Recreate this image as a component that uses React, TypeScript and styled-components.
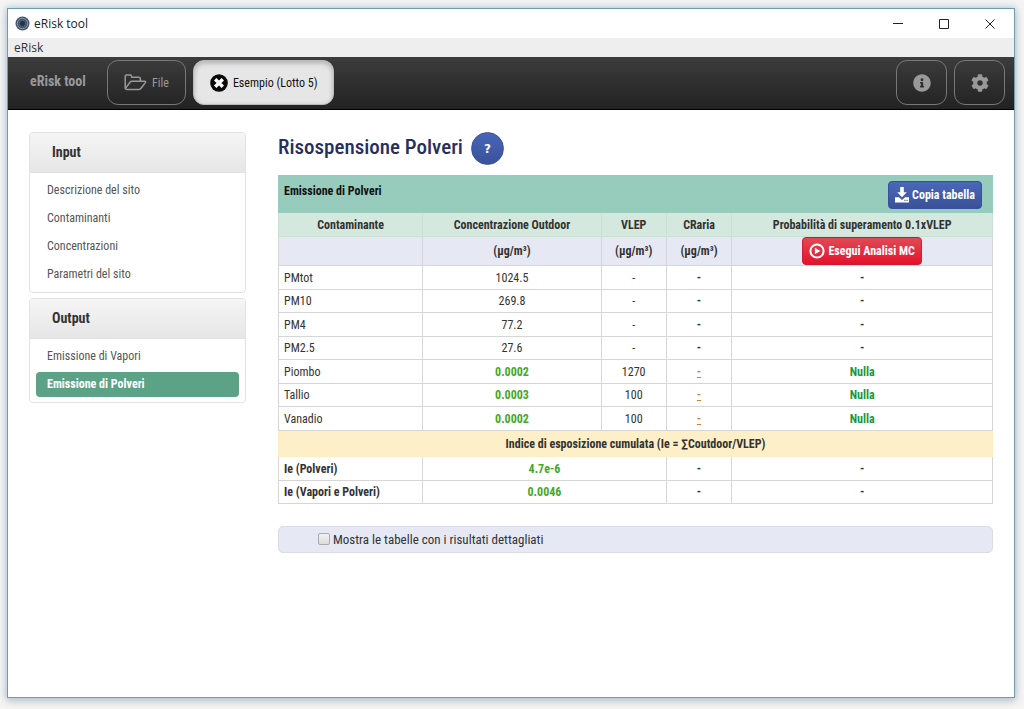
import React from "react";
import styled, { createGlobalStyle, css } from "styled-components";
import { FaInfoCircle, FaCog } from "react-icons/fa";

const GlobalStyle = createGlobalStyle`
  *, *::before, *::after { box-sizing: border-box; }
  body {
    margin: 0;
    background: #f6f5f4;
    font-family: "Roboto Condensed", "Liberation Sans Narrow", "Liberation Sans", sans-serif;
    font-size: 12px;
    line-height: 20px;
    color: #333;
  }
  button { font: inherit; cursor: pointer; }
`;

const Desktop = styled.div`
  display: flex;
  min-height: 100vh;
  padding: 8px 9px 11px 7px;
`;

const Window = styled.div`
  flex: 1;
  min-width: 0;
  display: flex;
  flex-direction: column;
  background: #fff;
  border: 1px solid #6f9bb5;
  box-shadow: 0 0 7px 1px rgba(120, 165, 200, 0.5), 0 4px 8px rgba(0, 0, 0, 0.12);
`;

const TitleBar = styled.header`
  display: flex;
  align-items: center;
  height: 29px;
  padding: 0 16px 0 7px;
  font-family: "Open Sans", sans-serif;
  font-size: 12px;
  color: #222;
`;

const WindowTitle = styled.span`
  flex: 1;
  margin-left: 4px;
`;

const WindowButtons = styled.div`
  display: flex;
  gap: 30px;
`;

const WindowButton = styled.button`
  display: flex;
  width: 16px;
  height: 16px;
  padding: 2px;
  border: 0;
  background: none;
`;

const MenuBar = styled.nav`
  height: 19px;
  padding: 0 6px;
  background: #eee;
  font-family: "Open Sans", sans-serif;
  font-size: 12px;
  line-height: 19px;
`;

const MenuLink = styled.a`
  color: #333;
  text-decoration: none;
`;

const Toolbar = styled.div`
  display: flex;
  align-items: flex-start;
  gap: 7px;
  height: 53px;
  padding: 3px 9px 0 22px;
  background: linear-gradient(#3c3c3c, #222);
  border-bottom: 1px solid #000;
`;

const Brand = styled.span`
  width: 70px;
  padding-top: 11px;
  font-size: 14px;
  font-weight: bold;
  color: #999;
  white-space: nowrap;
`;

const ToolButton = styled.button<{ $active?: boolean; $square?: boolean }>`
  display: flex;
  align-items: center;
  justify-content: center;
  gap: 5px;
  height: 45px;
  min-width: 51px;
  padding: ${(p) => (p.$square ? "0" : "0 16px")};
  border: 1px solid #777;
  border-radius: 11px;
  background: transparent;
  color: #999;
  white-space: nowrap;
  ${(p) =>
    p.$active &&
    css`
      border-color: #bbb;
      background: #e6e6e6;
      box-shadow: inset 0 2px 5px rgba(0, 0, 0, 0.25);
      color: #111;
    `}
`;

const Spacer = styled.div`
  flex: 1;
`;

const Content = styled.div`
  display: flex;
  align-items: flex-start;
  gap: 32px;
  padding: 22px 21px 22px;
`;

const Sidebar = styled.aside`
  display: flex;
  flex-direction: column;
  flex: 0 0 217px;
  gap: 5px;
`;

const Panel = styled.section`
  border: 1px solid #e2e2e2;
  border-radius: 4px;
  overflow: hidden;
`;

const PanelTitle = styled.h2`
  margin: 0;
  padding: 9px 22px 10px;
  background: linear-gradient(#f5f5f5, #e6e6e6);
  border-bottom: 1px solid #e2e2e2;
  font-size: 14px;
  font-weight: bold;
  line-height: 20px;
`;

const PanelList = styled.ul`
  display: flex;
  flex-direction: column;
  gap: 3px;
  margin: 0;
  padding: 5px 6px;
  list-style: none;
`;

const PanelLink = styled.a<{ $active?: boolean }>`
  display: block;
  padding: 0 11px;
  border-radius: 4px;
  line-height: 25px;
  text-decoration: none;
  color: ${(p) => (p.$active ? "#fff" : "#555")};
  background: ${(p) => (p.$active ? "#5ba286" : "transparent")};
  font-weight: ${(p) => (p.$active ? "bold" : "normal")};
`;

const Main = styled.main`
  flex: 1;
  min-width: 0;
`;

const Heading = styled.div`
  display: flex;
  align-items: center;
  gap: 8px;
  height: 33px;
  margin-bottom: 10px;
`;

const Title = styled.h1`
  margin: 0;
  padding-bottom: 4px;
  font-size: 21px;
  font-weight: 500;
  line-height: 28px;
  color: #27305c;
  white-space: nowrap;
`;

const HelpButton = styled.button`
  width: 33px;
  height: 33px;
  padding: 0;
  border: 1px solid #3a5294;
  border-radius: 50%;
  background: linear-gradient(#4766b8, #3a519b);
  color: #fff;
  && {
    font-family: "DejaVu Sans", sans-serif;
    font-size: 12px;
    font-weight: bold;
  }
`;

const ActionButton = styled.button<{ $danger?: boolean }>`
  display: inline-flex;
  align-items: center;
  justify-content: center;
  gap: 3px;
  height: 28px;
  padding: 0 6px;
  border: 1px solid ${(p) => (p.$danger ? "#d01c30" : "#36509a")};
  border-radius: 4px;
  background: ${(p) =>
    p.$danger ? "linear-gradient(#e04a55, #e5132c)" : "linear-gradient(#4a68b8, #3a5199)"};
  color: #fff;
  vertical-align: top;
  white-space: nowrap;
  && { font-weight: bold; }
`;

const Table = styled.table`
  width: 100%;
  border-collapse: collapse;
  table-layout: fixed;
`;

const Col = styled.col<{ $width?: string }>`
  width: ${(p) => p.$width ?? "auto"};
`;

const Cell = styled.td`
  padding: 0 5px;
  border: 1px solid #d6d6d6;
  text-align: center;
  white-space: nowrap;
`;

const HeadCell = styled(Cell).attrs({ as: "th" })`
  border-color: #cbe0d5;
  background: #d4e8de;
`;

const UnitCell = styled(Cell)`
  border-top-color: #e6e8f3;
  background: #e6e8f3;
  font-weight: bold;
`;

const NameCell = styled(Cell).attrs({ as: "th", scope: "row" })<{ $strong?: boolean }>`
  text-align: left;
  font-weight: ${(p) => (p.$strong ? "bold" : "normal")};
`;

const BannerCell = styled(HeadCell)`
  border-color: #97cbbb;
  background: #97cbbb;
  color: #111;
`;

const Banner = styled.div`
  display: flex;
  align-items: flex-start;
  justify-content: space-between;
  padding: 4px 5px 3px 0;
`;

const SumCell = styled(HeadCell)`
  border-color: #fdefc4;
  background: #fdf0c8;
`;

const Row = styled.tr<{ $height: number }>`
  height: ${(p) => p.$height}px;
`;

const Value = styled.span<{ $tone?: "green" | "risk" | "dark" }>`
  font-weight: ${(p) => (p.$tone ? "bold" : "normal")};
  color: ${(p) => (p.$tone === "green" ? "#43a82c" : p.$tone === "risk" ? "#16993f" : "inherit")};
`;

const DashLink = styled.a`
  color: #c98637;
  font-weight: bold;
  text-decoration: underline;
`;

const DetailBar = styled.div`
  display: flex;
  align-items: center;
  height: 27px;
  margin-top: 22px;
  padding-left: 39px;
  border: 1px solid #dadde8;
  border-radius: 5px;
  background: #e6e8f3;
`;

const DetailLabel = styled.label`
  display: flex;
  align-items: center;
  gap: 3px;
  font-size: 13px;
`;

const CheckBox = styled.input`
  appearance: none;
  width: 12px;
  height: 12px;
  margin: 0 0 2px;
  border: 1px solid #aaa;
  border-radius: 2px;
  background: linear-gradient(#f2f2f2, #dcdcdc);
  &:checked { background: #5ba286; }
`;

const AppIcon = () => (
  <svg width="15" height="15" viewBox="0 0 15 15" aria-hidden="true">
    <circle cx="7.5" cy="7.5" r="7" fill="#44566c" />
    <circle cx="7.5" cy="7.5" r="5.2" fill="none" stroke="#8b9aa9" strokeWidth="1" />
    <circle cx="7.5" cy="7.5" r="3" fill="#1f3550" stroke="#8294a6" strokeWidth="0.8" strokeDasharray="1 1" />
  </svg>
);

const FolderIcon = () => (
  <svg width="23" height="17" viewBox="0 0 23 17" fill="none" stroke="currentColor" strokeWidth="1.5" strokeLinejoin="round" aria-hidden="true">
    <path d="M1.2 14.2V2.4Q1.2 1 2.6 1H6.2Q7.6 1 7.6 2.4V3.2H14.8Q16.4 3.2 16.4 4.8V7" />
    <path d="M1.3 14.6L6 8.2Q6.8 7.2 8 7.2H20.6Q22.2 7.2 21.3 8.6L17.3 14Q16.3 15.4 15 15.4H2.6Q1.2 15.4 1.2 14" />
  </svg>
);

const CloseIcon = () => (
  <svg width="18" height="18" viewBox="0 0 18 18" aria-hidden="true">
    <circle cx="9" cy="9" r="8.8" fill="#0a0a0a" />
    <path d="M5.2 5.2L12.8 12.8M12.8 5.2L5.2 12.8" stroke="#fff" strokeWidth="3.4" />
  </svg>
);

const DownloadIcon = () => (
  <svg width="14" height="16" viewBox="0 0 14 16" fill="currentColor" aria-hidden="true">
    <path d="M5.2 0H8.8V5.2H11.8L7 10.2L2.2 5.2H5.2Z" />
    <path fillRule="evenodd" d="M0 10.2H4L7 13L10 10.2H14V15.4H0ZM9.4 12.8V14H10.5V12.8ZM11.6 12.8V14H12.7V12.8Z" />
  </svg>
);

const PlayIcon = () => (
  <svg width="16" height="16" viewBox="0 0 16 16" aria-hidden="true">
    <circle cx="8" cy="8" r="6.6" fill="none" stroke="currentColor" strokeWidth="2" />
    <path d="M5.9 4.7L11.4 8L5.9 11.3Z" fill="currentColor" />
  </svg>
);

const windowGlyphs: [string, string][] = [
  ["Riduci", "M1 5.5H11"],
  ["Ingrandisci", "M1.5 1.5H10.5V10.5H1.5Z"],
  ["Chiudi", "M1.5 1.5L10.5 10.5M10.5 1.5L1.5 10.5"],
];

const panels = [
  { title: "Input", items: ["Descrizione del sito", "Contaminanti", "Concentrazioni", "Parametri del sito"] },
  { title: "Output", items: ["Emissione di Vapori", "Emissione di Polveri"] },
];
const currentPage = "Emissione di Polveri";

const dusts = [
  ["PMtot", "1024.5"],
  ["PM10", "269.8"],
  ["PM4", "77.2"],
  ["PM2.5", "27.6"],
];
const metals = [
  ["Piombo", "0.0002", "1270"],
  ["Tallio", "0.0003", "100"],
  ["Vanadio", "0.0002", "100"],
];
const indices = [
  ["Ie (Polveri)", "4.7e-6"],
  ["Ie (Vapori e Polveri)", "0.0046"],
];

const rowHeight = (index: number) => (index % 2 ? 23 : 24);

export default function App() {
  return (
    <>
      <GlobalStyle />
      <Desktop>
        <Window>
          <TitleBar>
            <AppIcon />
            <WindowTitle>eRisk tool</WindowTitle>
            <WindowButtons>
              {windowGlyphs.map(([label, d]) => (
                <WindowButton key={label} type="button" aria-label={label}>
                  <svg width="12" height="12" viewBox="0 0 12 12" fill="none" stroke="#222">
                    <path d={d} />
                  </svg>
                </WindowButton>
              ))}
            </WindowButtons>
          </TitleBar>
          <MenuBar>
            <MenuLink href="#erisk">eRisk</MenuLink>
          </MenuBar>
          <Toolbar>
            <Brand>eRisk tool</Brand>
            <ToolButton type="button">
              <FolderIcon />
              File
            </ToolButton>
            <ToolButton type="button" $active>
              <CloseIcon />
              Esempio (Lotto 5)
            </ToolButton>
            <Spacer />
            <ToolButton type="button" aria-label="Informazioni" $square>
              <FaInfoCircle size={18} />
            </ToolButton>
            <ToolButton type="button" aria-label="Impostazioni" $square>
              <FaCog size={18} />
            </ToolButton>
          </Toolbar>
          <Content>
            <Sidebar>
              {panels.map((panel) => (
                <Panel key={panel.title}>
                  <PanelTitle>{panel.title}</PanelTitle>
                  <PanelList>
                    {panel.items.map((item) => (
                      <li key={item}>
                        <PanelLink href="#" $active={item === currentPage}>
                          {item}
                        </PanelLink>
                      </li>
                    ))}
                  </PanelList>
                </Panel>
              ))}
            </Sidebar>
            <Main>
              <Heading>
                <Title>Risospensione Polveri</Title>
                <HelpButton type="button" aria-label="Aiuto">?</HelpButton>
              </Heading>
              <Table>
                <colgroup>
                  <Col $width="20.2%" />
                  <Col $width="25%" />
                  <Col $width="9.1%" />
                  <Col $width="9.2%" />
                  <Col />
                </colgroup>
                <thead>
                  <Row $height={37}>
                    <BannerCell colSpan={5}>
                      <Banner>
                        <span>Emissione di Polveri</span>
                        <ActionButton type="button">
                          <DownloadIcon />
                          Copia tabella
                        </ActionButton>
                      </Banner>
                    </BannerCell>
                  </Row>
                  <Row $height={24}>
                    <HeadCell>Contaminante</HeadCell>
                    <HeadCell>Concentrazione Outdoor</HeadCell>
                    <HeadCell>VLEP</HeadCell>
                    <HeadCell>CRaria</HeadCell>
                    <HeadCell>Probabilità di superamento 0.1xVLEP</HeadCell>
                  </Row>
                </thead>
                <tbody>
                  <Row $height={29}>
                    <UnitCell />
                    <UnitCell>(µg/m³)</UnitCell>
                    <UnitCell>(µg/m³)</UnitCell>
                    <UnitCell>(µg/m³)</UnitCell>
                    <UnitCell>
                      <ActionButton type="button" $danger>
                        <PlayIcon />
                        Esegui Analisi MC
                      </ActionButton>
                    </UnitCell>
                  </Row>
                  {dusts.map(([name, outdoor], i) => (
                    <Row key={name} $height={rowHeight(i)}>
                      <NameCell>{name}</NameCell>
                      <Cell>{outdoor}</Cell>
                      <Cell>-</Cell>
                      <Cell><Value $tone="dark">-</Value></Cell>
                      <Cell><Value $tone="dark">-</Value></Cell>
                    </Row>
                  ))}
                  {metals.map(([name, outdoor, vlep], i) => (
                    <Row key={name} $height={rowHeight(i)}>
                      <NameCell>{name}</NameCell>
                      <Cell><Value $tone="green">{outdoor}</Value></Cell>
                      <Cell>{vlep}</Cell>
                      <Cell><DashLink href="#">-</DashLink></Cell>
                      <Cell><Value $tone="risk">Nulla</Value></Cell>
                    </Row>
                  ))}
                  <Row $height={26}>
                    <SumCell colSpan={5}>Indice di esposizione cumulata (Ie = ∑Coutdoor/VLEP)</SumCell>
                  </Row>
                  {indices.map(([name, value], i) => (
                    <Row key={name} $height={rowHeight(i)}>
                      <NameCell $strong>{name}</NameCell>
                      <Cell colSpan={2}><Value $tone="green">{value}</Value></Cell>
                      <Cell><Value $tone="dark">-</Value></Cell>
                      <Cell><Value $tone="dark">-</Value></Cell>
                    </Row>
                  ))}
                </tbody>
              </Table>
              <DetailBar>
                <DetailLabel>
                  <CheckBox type="checkbox" />
                  Mostra le tabelle con i risultati dettagliati
                </DetailLabel>
              </DetailBar>
            </Main>
          </Content>
        </Window>
      </Desktop>
    </>
  );
}
